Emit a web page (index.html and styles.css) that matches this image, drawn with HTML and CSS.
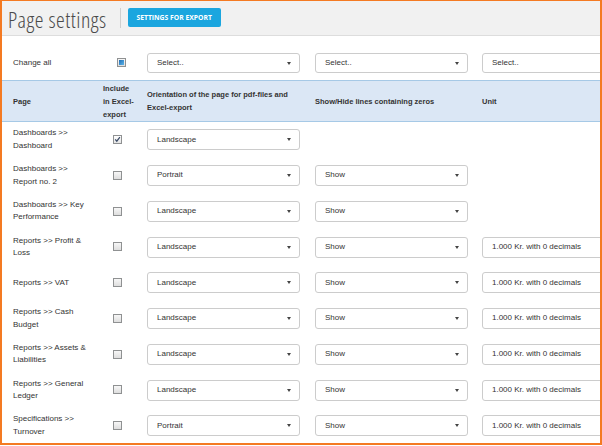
FILE: index.html
```html
<!DOCTYPE html>
<html lang="en">
<head>
<meta charset="utf-8">
<title>Page settings</title>
<link rel="stylesheet" href="styles.css">
</head>
<body>
<div class="frame">
  <header class="topbar">
    <h1 class="title">Page settings</h1>
    <span class="sep"></span>
    <button class="btn">Settings for export</button>
  </header>
  <table class="settings">
    <colgroup>
      <col class="w1"><col class="w2"><col class="w3"><col class="w4"><col class="w5">
    </colgroup>
    <tbody>
      <tr class="change-row">
        <td class="c1">Change all</td>
        <td class="c2"><span class="cb cb-ind cb-all"></span></td>
        <td class="c3"><div class="sel sel-sm"><span>Select..</span><span class="caret"></span></div></td>
        <td class="c4"><div class="sel sel-sm"><span>Select..</span><span class="caret"></span></div></td>
        <td class="c5"><div class="sel sel-sm"><span>Select..</span><span class="caret"></span></div></td>
      </tr>
      <tr class="head-row">
        <th class="c1">Page</th>
        <th class="c2">Include in Excel-export</th>
        <th class="c3">Orientation of the page for pdf-files and Excel-export</th>
        <th class="c4">Show/Hide lines containing zeros</th>
        <th class="c5">Unit</th>
      </tr>
      <tr class="data-row">
        <td class="c1">Dashboards &gt;&gt; Dashboard</td>
        <td class="c2"><span class="cb cb-on"><svg viewBox="0 0 7 7" width="7" height="7"><path d="M1.2 3.4 L2.8 5.2 L5.9 1.2" fill="none" stroke="#3a4a66" stroke-width="1.2"/></svg></span></td>
        <td class="c3"><div class="sel"><span>Landscape</span><span class="caret"></span></div></td>
        <td class="c4"></td>
        <td class="c5"></td>
      </tr>
      <tr class="data-row">
        <td class="c1">Dashboards &gt;&gt; Report no. 2</td>
        <td class="c2"><span class="cb"></span></td>
        <td class="c3"><div class="sel"><span>Portrait</span><span class="caret"></span></div></td>
        <td class="c4"><div class="sel"><span>Show</span><span class="caret"></span></div></td>
        <td class="c5"></td>
      </tr>
      <tr class="data-row">
        <td class="c1">Dashboards &gt;&gt; Key Performance</td>
        <td class="c2"><span class="cb"></span></td>
        <td class="c3"><div class="sel"><span>Landscape</span><span class="caret"></span></div></td>
        <td class="c4"><div class="sel"><span>Show</span><span class="caret"></span></div></td>
        <td class="c5"></td>
      </tr>
      <tr class="data-row">
        <td class="c1">Reports &gt;&gt; Profit &amp; Loss</td>
        <td class="c2"><span class="cb"></span></td>
        <td class="c3"><div class="sel"><span>Landscape</span><span class="caret"></span></div></td>
        <td class="c4"><div class="sel"><span>Show</span><span class="caret"></span></div></td>
        <td class="c5"><div class="sel"><span>1.000 Kr. with 0 decimals</span><span class="caret"></span></div></td>
      </tr>
      <tr class="data-row">
        <td class="c1">Reports &gt;&gt; VAT</td>
        <td class="c2"><span class="cb"></span></td>
        <td class="c3"><div class="sel"><span>Landscape</span><span class="caret"></span></div></td>
        <td class="c4"><div class="sel"><span>Show</span><span class="caret"></span></div></td>
        <td class="c5"><div class="sel"><span>1.000 Kr. with 0 decimals</span><span class="caret"></span></div></td>
      </tr>
      <tr class="data-row">
        <td class="c1">Reports &gt;&gt; Cash Budget</td>
        <td class="c2"><span class="cb"></span></td>
        <td class="c3"><div class="sel"><span>Landscape</span><span class="caret"></span></div></td>
        <td class="c4"><div class="sel"><span>Show</span><span class="caret"></span></div></td>
        <td class="c5"><div class="sel"><span>1.000 Kr. with 0 decimals</span><span class="caret"></span></div></td>
      </tr>
      <tr class="data-row">
        <td class="c1">Reports &gt;&gt; Assets &amp; Liabilities</td>
        <td class="c2"><span class="cb"></span></td>
        <td class="c3"><div class="sel"><span>Landscape</span><span class="caret"></span></div></td>
        <td class="c4"><div class="sel"><span>Show</span><span class="caret"></span></div></td>
        <td class="c5"><div class="sel"><span>1.000 Kr. with 0 decimals</span><span class="caret"></span></div></td>
      </tr>
      <tr class="data-row">
        <td class="c1">Reports &gt;&gt; General Ledger</td>
        <td class="c2"><span class="cb"></span></td>
        <td class="c3"><div class="sel"><span>Landscape</span><span class="caret"></span></div></td>
        <td class="c4"><div class="sel"><span>Show</span><span class="caret"></span></div></td>
        <td class="c5"><div class="sel"><span>1.000 Kr. with 0 decimals</span><span class="caret"></span></div></td>
      </tr>
      <tr class="data-row">
        <td class="c1">Specifications &gt;&gt; Turnover</td>
        <td class="c2"><span class="cb"></span></td>
        <td class="c3"><div class="sel"><span>Portrait</span><span class="caret"></span></div></td>
        <td class="c4"><div class="sel"><span>Show</span><span class="caret"></span></div></td>
        <td class="c5"><div class="sel"><span>1.000 Kr. with 0 decimals</span><span class="caret"></span></div></td>
      </tr>
    </tbody>
  </table>
</div>
</body>
</html>
```

FILE: styles.css
```css
html, body {
  margin: 0;
  padding: 0;
  background: #ffffff;
}

.frame {
  width: 602px;
  height: 445px;
  box-sizing: border-box;
  border: 2px solid #f47a22;
  border-top-width: 1px;
  overflow: hidden;
  background: #ffffff;
  font-family: "Liberation Sans", Arial, sans-serif;
  font-size: 8px;
  color: #333333;
}

.topbar {
  height: 34px;
  background: #f1f1f1;
  border-bottom: 1px solid #dddddd;
  display: flex;
  align-items: center;
  padding-left: 6px;
}

.title {
  margin: 0;
  font-family: "Open Sans", sans-serif;
  font-weight: 300;
  font-stretch: 75%;
  font-size: 22px;
  color: #4a4a4a;
  letter-spacing: 0.5px;
  line-height: 1;
  position: relative;
  top: 1px;
}

.sep {
  width: 1px;
  height: 20px;
  background: #cfcfcf;
  margin-left: 13px;
  margin-right: 7px;
}

.btn {
  width: 93px;
  height: 19px;
  border: 0;
  border-radius: 2px;
  background: #1ba6df;
  color: #ffffff;
  font-family: "Open Sans", sans-serif;
  font-weight: 700;
  font-size: 6.8px;
  text-transform: uppercase;
  padding: 0;
  margin-top: -1px;
}

.settings {
  border-collapse: separate;
  border-spacing: 0;
  table-layout: fixed;
  width: 644px;
}

.w1 { width: 95px; }
.w2 { width: 44px; }
.w3 { width: 168px; }
.w4 { width: 167px; }
.w5 { width: 170px; }

.settings td,
.settings th {
  padding: 0;
  vertical-align: middle;
  text-align: left;
  box-sizing: border-box;
  line-height: 12.5px;
}

.settings .c1 { padding-left: 11px; padding-right: 9px; }
.settings .c2 { padding-left: 6px; padding-right: 4px; }
.settings .c3,
.settings .c4,
.settings .c5 { padding-left: 6px; }

.change-row td {
  height: 44px;
  padding-top: 10px;
}

.head-row th {
  height: 42px;
  background: #dbe7f5;
  border-top: 1px solid #a6c9e6;
  border-bottom: 1px solid #a6c9e6;
  font-weight: 700;
  font-size: 7.5px;
  line-height: 13px;
  color: #333333;
}

.head-row th.c3 { line-height: 13.5px; }

.data-row td {
  height: 35.75px;
}

.cb {
  display: inline-block;
  width: 9px;
  height: 9px;
  box-sizing: border-box;
  border: 1px solid #8f9192;
  background: linear-gradient(#f7f7f7, #dedede);
  vertical-align: middle;
  margin-left: 10px;
  position: relative;
}

.cb-all { margin-left: 14px; }

.cb-on {
  display: inline-flex;
  align-items: center;
  justify-content: center;
  background: linear-gradient(#ffffff, #e4e4e4);
}

.cb-ind {
  display: inline-flex;
  align-items: center;
  justify-content: center;
}

.cb-ind::before {
  content: "";
  width: 5px;
  height: 5px;
  background: linear-gradient(135deg, #1f6db5, #5cb5ea);
}

.sel {
  width: 153px;
  height: 21px;
  box-sizing: border-box;
  border: 1px solid #cccccc;
  border-radius: 3px;
  background: #ffffff;
  display: flex;
  align-items: center;
  padding-left: 9px;
  padding-right: 8px;
  font-size: 8px;
  color: #333333;
}

.sel-sm { height: 20px; }

.caret {
  margin-left: auto;
  width: 0;
  height: 0;
  border-left: 2.5px solid transparent;
  border-right: 2.5px solid transparent;
  border-top: 3px solid #444444;
}
```
